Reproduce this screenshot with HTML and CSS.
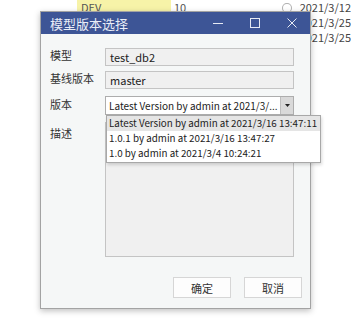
FILE: index.html
```html
<!DOCTYPE html>
<html>
<head>
<meta charset="utf-8">
<link rel="stylesheet" href="styles.css">
</head>
<body>
<div class="bg">
  <div class="row">
    <span class="cell-name hl">DEV</span><span class="cell-num">10</span><span class="cell-chk"></span><span class="cell-date">2021/3/12</span>
  </div>
  <div class="row">
    <span class="cell-name"></span><span class="cell-num"></span><span class="cell-chk"></span><span class="cell-date">2021/3/25</span>
  </div>
  <div class="row">
    <span class="cell-name"></span><span class="cell-num"></span><span class="cell-chk"></span><span class="cell-date">2021/3/25</span>
  </div>
</div>

<div class="dialog">
  <div class="titlebar">
    <span class="title">模型版本选择</span>
    <span class="ctrls">
      <svg class="ctl" width="12" height="12" viewBox="0 0 12 12"><path d="M1 6.5H11" stroke="#e6eaf4" stroke-width="1"/></svg>
      <svg class="ctl" width="12" height="12" viewBox="0 0 12 12"><rect x="1.5" y="1.5" width="9" height="9" fill="none" stroke="#e6eaf4" stroke-width="1"/></svg>
      <svg class="ctl" width="12" height="12" viewBox="0 0 12 12"><path d="M1.5 1.5L10.5 10.5M10.5 1.5L1.5 10.5" stroke="#e6eaf4" stroke-width="1"/></svg>
    </span>
  </div>
  <div class="body">
    <div class="field">
      <span class="label">模型</span>
      <div class="input">test_db2</div>
    </div>
    <div class="field">
      <span class="label">基线版本</span>
      <div class="input">master</div>
    </div>
    <div class="field combo-field">
      <span class="label">版本</span>
      <div class="combo">
        <div class="combo-text">Latest Version by admin at 2021/3/...</div>
        <div class="combo-btn"><svg width="5" height="3" viewBox="0 0 5 3"><path d="M0 0H5L2.5 3Z" fill="#222"/></svg></div>
      </div>
    </div>
    <div class="field desc-field">
      <span class="label">描述</span>
      <div class="textarea"></div>
    </div>
    <div class="buttons">
      <div class="btn">确定</div>
      <div class="btn">取消</div>
    </div>
  </div>
</div>

<div class="dropdown">
  <div class="item sel">Latest Version by admin at 2021/3/16 13:47:11</div>
  <div class="item">1.0.1 by admin at 2021/3/16 13:47:27</div>
  <div class="item">1.0 by admin at 2021/3/4 10:24:21</div>
</div>
</body>
</html>
```

FILE: styles.css
```css
html, body {
  margin: 0;
  padding: 0;
  width: 351px;
  height: 323px;
  overflow: hidden;
  background: #ffffff;
  font-family: "Noto Sans CJK SC", "Noto Sans", sans-serif;
  font-size: 11px;
  color: #333;
}

.bg {
  margin-top: 0;
}
.row {
  display: flex;
  align-items: center;
  height: 15px;
  line-height: 15px;
  color: #555;
  font-size: 11px;
}
.cell-name {
  margin-left: 77px;
  width: 98px;
  height: 15px;
  line-height: 15px;
  padding-left: 4px;
  box-sizing: border-box;
}
.cell-name.hl {
  background: #f7f3a8;
}
.cell-num {
  width: 113px;
  padding-left: 3px;
}
.cell-chk {
  width: 8px;
  height: 8px;
  border: 1px solid #b0b0b0;
  border-radius: 50%;
  visibility: hidden;
}
.row:first-child .cell-chk {
  visibility: visible;
}
.cell-date {
  margin-left: 8px;
  color: #444;
}

.dialog {
  position: absolute;
  left: 40px;
  top: 11px;
  width: 271px;
  height: 298px;
  box-sizing: border-box;
  border: 1px solid #a3a3a3;
  background: #f5f7f7;
  box-shadow: 0 2px 6px rgba(0, 0, 0, 0.25);
  display: flex;
  flex-direction: column;
}

.titlebar {
  height: 22px;
  background: #3d5596;
  display: flex;
  align-items: center;
  justify-content: space-between;
  padding-left: 9px;
  flex-shrink: 0;
}
.title {
  color: #e9edf7;
  font-size: 13px;
}
.ctrls {
  display: flex;
  gap: 25px;
  margin-right: 12px;
}
.ctl {
  display: block;
}

.body {
  flex: 1;
  padding: 14px 8px 10px 9px;
  display: flex;
  flex-direction: column;
}

.field {
  display: flex;
  align-items: center;
  margin-bottom: 5px;
}
.combo-field {
  margin-top: 2px;
  margin-bottom: 7px;
}
.label {
  width: 55px;
  flex-shrink: 0;
  margin-top: -4px;
  color: #333;
}
.input {
  width: 189px;
  height: 18px;
  box-sizing: border-box;
  border: 1px solid #c4c4c4;
  background: #f0f0f0;
  padding-left: 4px;
  line-height: 16px;
  color: #222;
}
.combo {
  width: 189px;
  height: 19px;
  box-sizing: border-box;
  display: flex;
  border: 1px solid #adadad;
  background: #fff;
}
.combo-text {
  flex: 1;
  min-width: 0;
  padding-left: 3px;
  line-height: 17px;
  font-size: 10px;
  color: #222;
  white-space: nowrap;
  overflow: hidden;
}
.combo-btn {
  width: 12px;
  background: #d9d9d9;
  border-left: 1px solid #bdbdbd;
  display: flex;
  align-items: center;
  justify-content: center;
}

.desc-field {
  align-items: flex-start;
}
.desc-field .label {
  margin-top: 3px;
}
.textarea {
  width: 189px;
  height: 135px;
  box-sizing: border-box;
  border: 1px solid #c4c4c4;
  background: #f0f0f0;
}

.buttons {
  margin-top: auto;
  display: flex;
  justify-content: flex-end;
  gap: 13px;
}
.btn {
  width: 58px;
  height: 21px;
  box-sizing: border-box;
  border: 1px solid #d6d6d6;
  background: #fdfdfd;
  display: flex;
  align-items: center;
  justify-content: center;
  color: #333;
}

.dropdown {
  position: absolute;
  left: 106px;
  top: 115px;
  width: 215px;
  box-sizing: border-box;
  border: 1px solid #a8a8a8;
  background: #fff;
  box-shadow: 1px 2px 3px rgba(0, 0, 0, 0.15);
  padding-bottom: 1px;
}
.item {
  height: 15px;
  line-height: 15px;
  padding-left: 2px;
  color: #222;
  white-space: nowrap;
  font-size: 9.8px;
}
.item.sel {
  background: #e5e5e5;
}
```
